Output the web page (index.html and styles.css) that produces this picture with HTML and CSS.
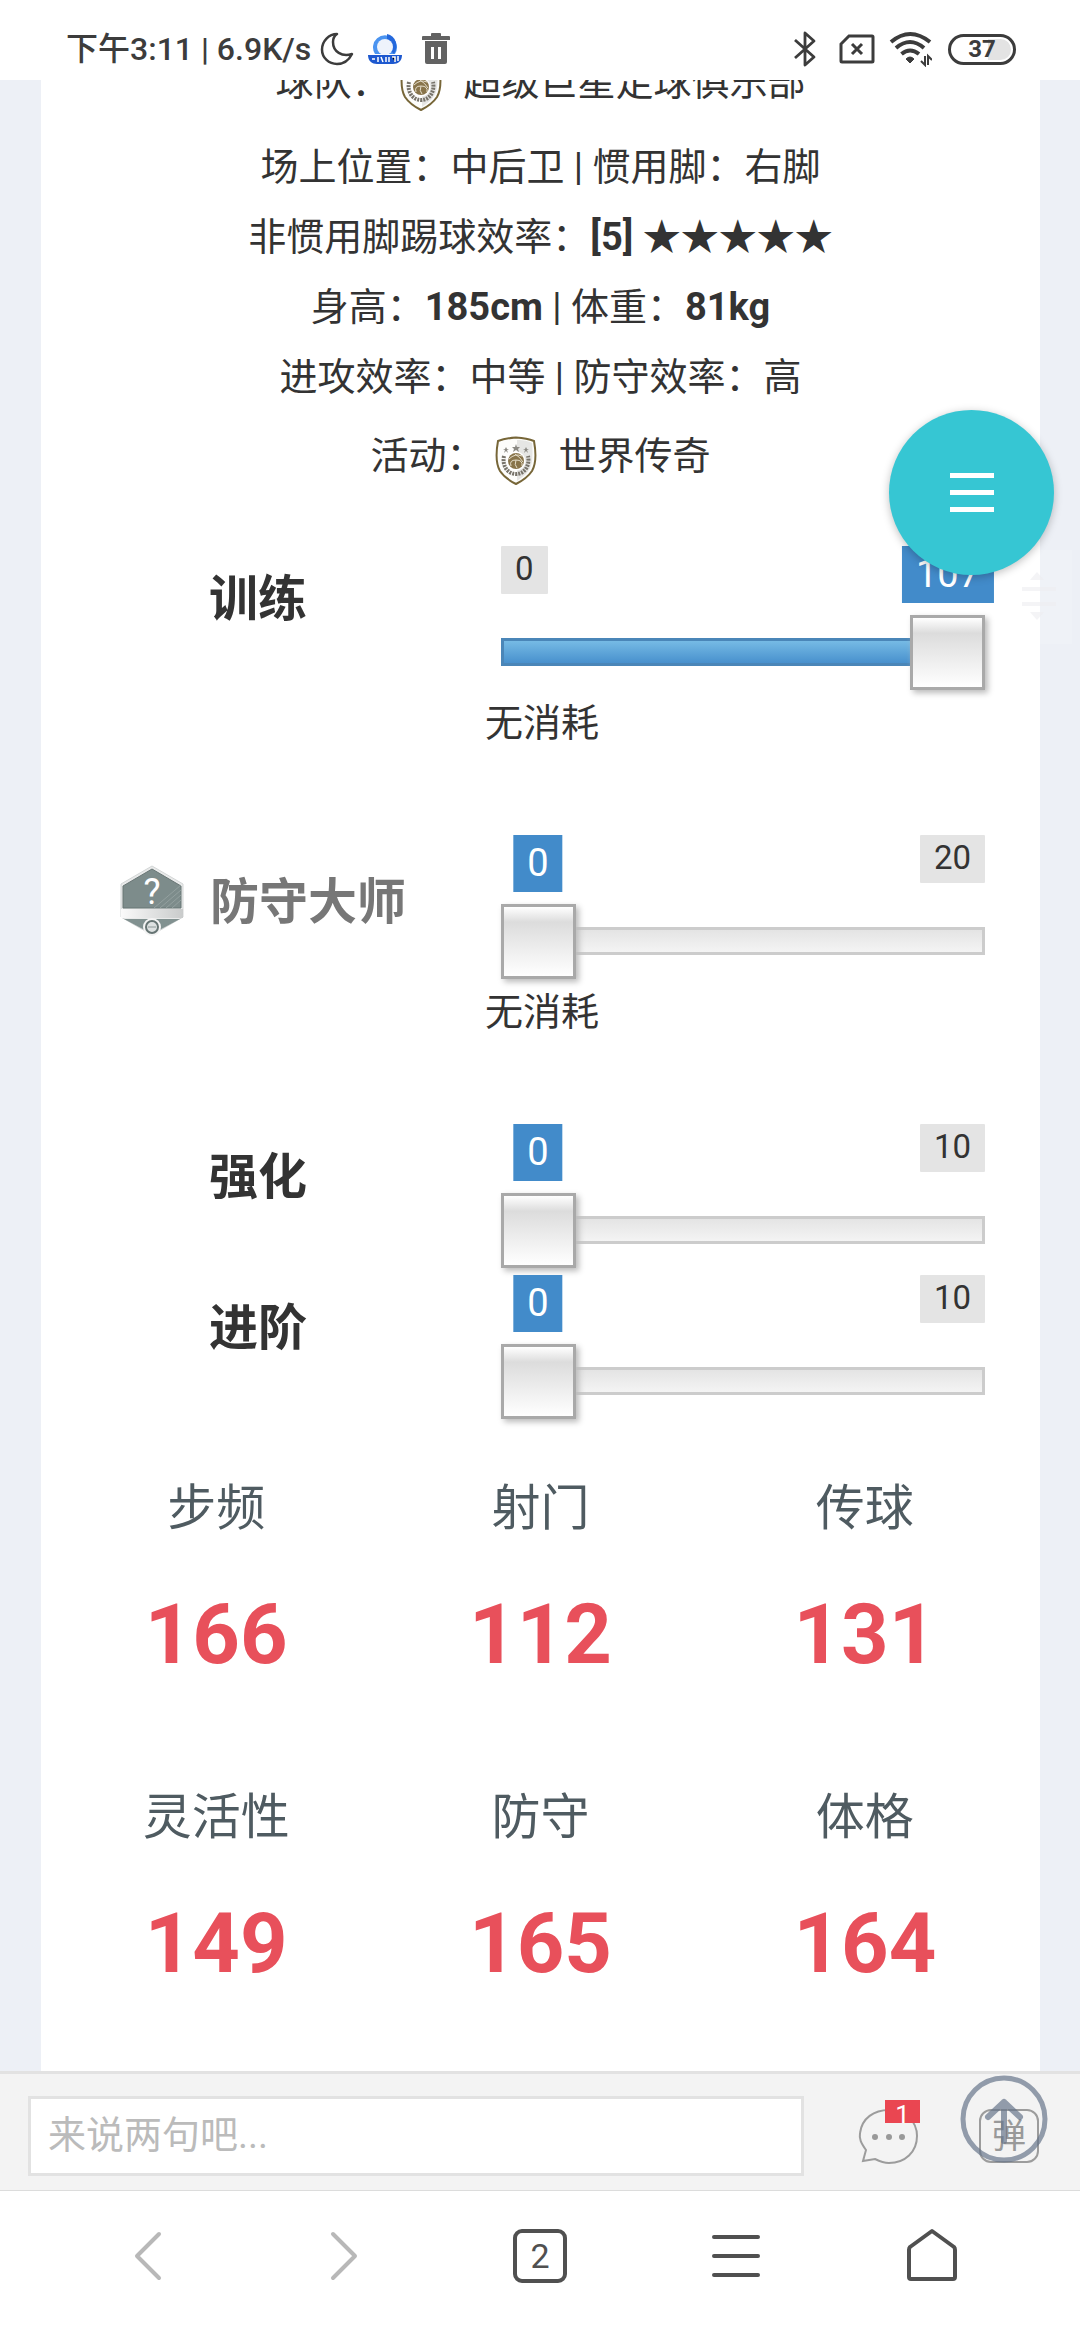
FILE: index.html
```html
<!DOCTYPE html>
<html lang="zh-CN">
<head>
  <meta charset="UTF-8">
  <meta name="viewport" content="width=device-width, initial-scale=1.0">
  <title>球员数据</title>
  <link rel="stylesheet" href="styles.css">
</head>
<body>
  <!-- shared shield badge -->
  <svg class="defs" width="0" height="0" aria-hidden="true">
    <symbol id="shield" viewBox="0 0 42 49">
      <path d="M21 1.500C14 2 8 3 3 5C1 16 1 28 5 35C9 41 15 45 21 48C27 45 33 41 37 35C41 28 41 16 39 5C34 3 28 2 21 1.500Z" fill="#fdfdfb" stroke="#776638" stroke-width="2"/>
      <path d="M22 4C29 4 33 5 37 7C38 17 38 28 34 34C31 39 26 42 22 45Z" fill="#e6e6e4"/>
      <path d="M9 20C7 29 12 38 21 38C30 38 35 29 33 20" fill="none" stroke="#77736a" stroke-width="4" stroke-dasharray="2 1"/>
      <circle cx="21" cy="25" r="9.500" fill="#fff"/>
      <circle cx="21" cy="25" r="8" fill="#88744a"/>
      <path d="M14 23Q20 17 27 20M16 30Q14 24 21 24Q28 24 27 30M21 24Q19 29 22 32M20 18Q25 21 28 26" fill="none" stroke="#e6dfcb" stroke-width="1"/>
      <path d="M21 8l1 3h3l-2 2 1 3-3-2-3 2 1-3-2-2h3zM11 11l1 2h2l-2 1 1 3-2-2-2 2 1-3-2-1h2zM31 11l1 2h2l-2 1 1 3-2-2-2 2 1-3-2-1h2z" fill="#8c8a84"/>
    </symbol>
  </svg>

  <header class="status">
    <div class="status-left">
      <span class="status-text">下午3:11 | 6.9K/s</span>
      <svg width="34" height="34" viewBox="0 0 34 34"><path d="M17 2C9 2 2 9 2 17.500C2 26 9 32 17 32C24 32 29 28 32 22C22 25 13 20 13 10C13 7 14 4 17 2Z" fill="none" stroke="#3c3c3c" stroke-width="2.500" stroke-linejoin="round"/></svg>
      <svg class="logo" width="34" height="32" viewBox="0 0 34 32">
        <path d="M7 21A12 12 0 1 1 27 21Z" fill="#4b94f0"/>
        <path d="M19 1C28 3 31 13 26 21L19 14Z" fill="#2468dc"/>
        <circle cx="17" cy="14" r="8" fill="#eef3fb"/>
        <path d="M0 22H34C34 28 30 31 25 31H9C4 31 0 28 0 22Z" fill="#1d58cf"/>
        <path d="M4 26h3M10 24v5M13 24l2 5M18 24v5M21 24v5M24 24h3v5M30 23v5" stroke="#fff" stroke-width="1.500"/>
      </svg>
      <svg class="trash" width="28" height="32" viewBox="0 0 28 32"><path fill="#626262" fill-rule="evenodd" d="M9 3V1Q9 0 10 0H18Q19 0 19 1V3H27Q28 3 28 4V7H0V4Q0 3 1 3ZM3 8H25V29Q25 31 23 31H5Q3 31 3 29ZM9 14V26H12V14ZM16 14V26H19V14Z"/></svg>
    </div>
    <div class="status-right">
      <svg width="22" height="36" viewBox="0 0 22 36"><path d="M1 9L20 26L11 34V2L20 10L1 27" fill="none" stroke="#3c3c3c" stroke-width="2.800" stroke-linejoin="round"/></svg>
      <svg class="sim" width="36" height="30" viewBox="0 0 36 30"><path d="M10 2H33Q34 2 34 3V27Q34 28 33 28H3Q2 28 2 27V10Z" fill="none" stroke="#3c3c3c" stroke-width="3"/><path d="M13 10L23 20M23 10L13 20" stroke="#3c3c3c" stroke-width="3"/></svg>
      <svg class="wifi" width="43" height="36" viewBox="0 0 43 36">
        <path d="M2 11Q21 -5 41 11M7 17Q21 5 35 17M12.500 23Q21 16 30 23" fill="none" stroke="#3c3c3c" stroke-width="4"/>
        <path d="M17 28Q21 24 25 28L21 32Z" fill="#3c3c3c" stroke="#3c3c3c" stroke-width="1"/>
        <path d="M36 25V34L32 30M39 34V25L43 29" fill="none" stroke="#3c3c3c" stroke-width="2"/>
      </svg>
      <span class="battery">37</span>
    </div>
  </header>

  <main class="page">
    <section class="card">
      <div class="info">
        <p class="info-badge">球队：<svg class="shield"><use href="#shield"/></svg>超级巨星足球俱乐部</p>
        <p>场上位置：中后卫 | 惯用脚：右脚</p>
        <p>非惯用脚踢球效率：<b>[5] ★★★★★</b></p>
        <p>身高：<b>185cm</b> | 体重：<b>81kg</b></p>
        <p>进攻效率：中等 | 防守效率：高</p>
        <p class="info-badge">活动：<svg class="shield"><use href="#shield"/></svg>世界传奇</p>
      </div>

      <div class="sliders">
        <div class="row">
          <label class="row-label" for="training">训练</label>
          <div class="row-body">
            <div class="slider">
              <div class="limits"><span class="limit">0</span></div>
              <div class="rail"><output class="value" for="training" style="left: 100%">107</output></div>
              <input class="range range-full" id="training" type="range" min="0" max="107" value="107">
            </div>
            <p class="note">无消耗</p>
          </div>
        </div>

        <div class="row">
          <label class="row-label row-label-icon" for="master">
            <svg class="hex" width="64" height="72" viewBox="0 0 64 72">
              <defs><linearGradient id="band" x1="0" x2="1" y1="0" y2="0"><stop offset="0" stop-color="#fafafa"/><stop offset="1" stop-color="#c9cbcb"/></linearGradient></defs>
              <path d="M32 1L63 19V52L32 70L1 52V19Z" fill="#e9eaea" stroke="#d3d6d6" stroke-width="1"/>
              <path d="M32 4L61 21V43H3V21Z" fill="#7d8c8b" stroke="#697675" stroke-width="1"/>
              <path d="M40 43L61 25M46 43L61 30M52 43L61 35M34 43L61 20" stroke="#93a09f" stroke-width="1"/>
              <rect x="1" y="44" width="62" height="9" fill="url(#band)"/>
              <path d="M4 54H60L32 69Z" fill="#819190"/>
              <circle cx="32" cy="62" r="9" fill="#f4f4f4"/>
              <circle cx="32" cy="62" r="6" fill="#dde1e1" stroke="#667473" stroke-width="2"/>
              <path d="M28 62H36" stroke="#8d9897" stroke-width="1"/>
              <text x="32" y="39" text-anchor="middle" class="hex-mark">?</text>
            </svg>
            防守大师
          </label>
          <div class="row-body">
            <div class="slider">
              <div class="limits limits-end"><span class="limit">20</span></div>
              <div class="rail"><output class="value" for="master" style="left: 0%">0</output></div>
              <input class="range" id="master" type="range" min="0" max="20" value="0">
            </div>
            <p class="note">无消耗</p>
          </div>
        </div>

        <div class="row">
          <label class="row-label" for="boost">强化</label>
          <div class="row-body">
            <div class="slider">
              <div class="limits limits-end"><span class="limit">10</span></div>
              <div class="rail"><output class="value" for="boost" style="left: 0%">0</output></div>
              <input class="range" id="boost" type="range" min="0" max="10" value="0">
            </div>
          </div>
        </div>

        <div class="row">
          <label class="row-label" for="rank">进阶</label>
          <div class="row-body">
            <div class="slider">
              <div class="limits limits-end"><span class="limit">10</span></div>
              <div class="rail"><output class="value" for="rank" style="left: 0%">0</output></div>
              <input class="range" id="rank" type="range" min="0" max="10" value="0">
            </div>
          </div>
        </div>
      </div>

      <dl class="stats">
        <div class="stat"><dt>步频</dt><dd>166</dd></div>
        <div class="stat"><dt>射门</dt><dd>112</dd></div>
        <div class="stat"><dt>传球</dt><dd>131</dd></div>
        <div class="stat"><dt>灵活性</dt><dd>149</dd></div>
        <div class="stat"><dt>防守</dt><dd>165</dd></div>
        <div class="stat"><dt>体格</dt><dd>164</dd></div>
      </dl>
    </section>
  </main>

  <footer class="comment">
    <input class="comment-input" type="text" placeholder="来说两句吧..." aria-label="评论">
    <button class="comment-btn" type="button" aria-label="评论列表">
      <svg width="62" height="60" viewBox="0 0 62 60">
        <path d="M8 44C3 37 1 33 2 27C4 12 16 4 31 4C47 4 59 15 59 30C59 46 47 57 31 57C26 57 21 55 17 53L5 55Z" fill="none" stroke="#9c9c9c" stroke-width="2"/>
        <g fill="#999"><circle cx="17" cy="31" r="3"/><circle cx="31" cy="31" r="3"/><circle cx="44" cy="31" r="3"/></g>
      </svg>
      <span class="badge">1</span>
    </button>
    <button class="danmu" type="button">弹</button>
    <a class="top-link" href="#" aria-label="回到顶部">
      <svg width="88" height="88" viewBox="0 0 88 88"><g fill="none" stroke="#66758a" stroke-opacity="0.700"><circle cx="44" cy="44" r="41" stroke-width="5"/><path d="M28 42L44 27L60 42M44 27V66" stroke-width="6" stroke-linejoin="round" stroke-linecap="round"/></g></svg>
    </a>
  </footer>

  <nav class="nav">
    <button type="button" aria-label="后退"><svg width="56" height="56" viewBox="0 0 56 56"><path d="M39 6L17 28L39 50" stroke="#b8b8b8"/></svg></button>
    <button type="button" aria-label="前进"><svg width="56" height="56" viewBox="0 0 56 56"><path d="M17 6L39 28L17 50" stroke="#b8b8b8"/></svg></button>
    <button type="button" aria-label="标签页"><span class="tabs">2</span></button>
    <button type="button" aria-label="菜单"><svg width="56" height="56" viewBox="0 0 56 56"><path d="M6 9H50M6 28H50M6 47H50"/></svg></button>
    <button type="button" aria-label="主页"><svg width="56" height="56" viewBox="0 0 56 56"><path d="M28 3L50 19Q51 20 51 22V49Q51 51 49 51H7Q5 51 5 49V22Q5 20 6 19Z"/></svg></button>
  </nav>

  <div class="scroller">
    <svg width="70" height="94" viewBox="0 0 70 94"><path d="M28 30L35 22L42 30ZM28 62L35 70L42 62ZM20 37H54V41H20ZM20 52H54V56H20Z" fill="#ededf0" fill-opacity="0.600"/></svg>
  </div>
  <button class="fab" type="button" aria-label="菜单"><i></i><i></i><i></i></button>
</body>
</html>
```
FILE: styles.css
```css
* {
  box-sizing: border-box;
}
body {
  margin: 0;
  height: 100vh;
  display: flex;
  flex-direction: column;
  position: relative;
  overflow: hidden;
  background-color: #edf0f6;
  color: #333;
  font-family: Roboto, "Noto Sans CJK SC", sans-serif;
  font-size: 38px;
}
p, dl, dd {
  margin: 0;
}
button {
  padding: 0;
  border: none;
  background: none;
  font-family: inherit;
  cursor: pointer;
}
svg {
  display: block;
}
.defs {
  position: absolute;
}

/* status bar */
.status {
  flex: none;
  height: 80px;
  padding: 18px 64px 0 66px;
  display: flex;
  justify-content: space-between;
  align-items: center;
  background-color: #fff;
  color: #3c3c3c;
}
.status-left, .status-right {
  display: flex;
  align-items: center;
}
.status-text {
  font-size: 32px;
  font-weight: 500;
  line-height: 40px;
  margin-right: 9px;
}
.logo {
  margin-left: 14px;
}
.trash {
  margin-left: 20px;
}
.sim {
  margin-left: 23px;
}
.wifi {
  margin-left: 14px;
}
.battery {
  width: 68px;
  height: 31px;
  margin-left: 16px;
  border: 3px solid #3c3c3c;
  border-radius: 16px;
  background: linear-gradient(90deg, #fff 60%, #e3e3e3 60%) content-box;
  padding: 2px;
  font-size: 24px;
  font-weight: 700;
  line-height: 21px;
  text-align: center;
}

/* player card */
.page {
  flex: 1;
  min-height: 0;
  padding: 0 40px 0 41px;
  overflow: hidden;
}
.card {
  min-height: 100%;
  background-color: #fff;
  display: flow-root;
}
.info {
  margin-top: -42px;
  text-align: center;
  line-height: 70px;
}
.info-badge {
  height: 94px;
  padding-bottom: 6px;
  display: flex;
  justify-content: center;
  align-items: center;
}
.shield {
  width: 42px;
  height: 49px;
  margin: 8px 22px 0 10px;
}

/* sliders */
.sliders {
  margin-top: 40px;
}
.row {
  display: grid;
  grid-template-columns: 4fr 5fr;
  padding-bottom: 8px;
}
.row-label {
  height: 96px;
  padding-left: 168px;
  display: flex;
  align-items: center;
  font-size: 49px;
  font-weight: 700;
}
.row-label-icon {
  height: 124px;
  padding-left: 79px;
  gap: 26px;
  color: #777;
}
.hex {
  margin-top: 8px;
}
.hex-mark {
  font-size: 36px;
  font-weight: 400;
  fill: #fff;
}
.slider {
  margin: 0 55px 0 16px;
}
.limits {
  height: 68px;
  display: flex;
  align-items: flex-start;
}
.limits-end {
  justify-content: flex-end;
}
.limit {
  height: 48px;
  padding: 0 14px;
  border-radius: 1px;
  background-color: #e4e4e4;
  font-size: 33px;
  line-height: 46px;
}
.rail {
  position: relative;
  margin: 0 37px;
}
.value {
  position: absolute;
  bottom: 11px;
  height: 57px;
  padding: 0 14px;
  transform: translateX(-50%);
  background-color: #428bca;
  color: #fff;
  font-size: 38px;
  line-height: 56px;
}
.range {
  -webkit-appearance: none;
  appearance: none;
  display: block;
  width: 100%;
  height: 75px;
  margin: 0;
  background: none;
}
.range::-webkit-slider-runnable-track {
  height: 28px;
  box-shadow: inset 0 0 0 3px #ccc;
  background: linear-gradient(#e2e2e2, #f6f6f6);
}
.range-full::-webkit-slider-runnable-track {
  box-shadow: inset 0 0 0 3px #4a86b8;
  background: linear-gradient(#7cc0e8, #428bca);
}
.range::-webkit-slider-thumb {
  -webkit-appearance: none;
  width: 75px;
  height: 75px;
  margin-top: -23px;
  border: 3px solid #a9a9a9;
  background: linear-gradient(#fff, #dcdcdc 22%, #fff);
  box-shadow: 3px 3px 6px #bbb;
}
.note {
  margin-bottom: 70px;
  line-height: 68px;
}

/* stats */
.stats {
  display: grid;
  grid-template-columns: repeat(3, 1fr);
  padding: 48px 13px 0;
  text-align: center;
}
.stat {
  padding-bottom: 98px;
}
.stat dt {
  font-size: 49px;
  line-height: 70px;
  color: #4f5b61;
}
.stat dd {
  margin-top: 41px;
  font-size: 83px;
  font-weight: 700;
  line-height: 100px;
  color: #e8505b;
}

/* comment bar */
.comment {
  flex: none;
  position: relative;
  height: 120px;
  padding: 7px 41px 0 28px;
  display: flex;
  align-items: center;
  border-top: 3px solid #e2e2e2;
  border-bottom: 1px solid #dcdcdc;
  background-color: #f3f3f3;
}
.comment-input {
  flex: 1;
  min-width: 0;
  height: 80px;
  padding: 0 17px 2px;
  border: 3px solid #e2e2e2;
  background-color: #fff;
  font-family: inherit;
  font-size: 38px;
}
.comment-input::placeholder {
  color: #bbb;
}
.comment-btn {
  position: relative;
  margin-left: 54px;
}
.badge {
  position: absolute;
  top: -6px;
  right: 0;
  width: 35px;
  height: 23px;
  overflow: hidden;
  background-color: #ea4651;
  color: #fff;
  font-size: 26px;
  line-height: 30px;
  text-align: center;
}
.danmu {
  width: 60px;
  height: 54px;
  margin-left: 59px;
  border: 2px solid #9c9c9c;
  border-radius: 12px;
  color: #999;
  font-size: 34px;
  line-height: 48px;
}
.top-link {
  position: absolute;
  top: 1px;
  right: 32px;
}

/* browser nav */
.nav {
  flex: none;
  height: 149px;
  padding: 0 50px 20px;
  display: grid;
  grid-template-columns: repeat(5, 1fr);
  background-color: #fff;
}
.nav button {
  display: flex;
  justify-content: center;
  align-items: center;
}
.nav path {
  fill: none;
  stroke-width: 4;
  stroke-linecap: round;
  stroke-linejoin: round;
}
.nav path:not([stroke]) {
  stroke: #505050;
}
.tabs {
  width: 54px;
  height: 54px;
  border: 4px solid #505050;
  border-radius: 9px;
  color: #505050;
  font-size: 34px;
  line-height: 46px;
}

/* floating controls */
.scroller {
  position: absolute;
  top: 550px;
  right: 8px;
  background-color: rgba(255, 255, 255, 0.15);
}
.fab {
  position: absolute;
  top: 410px;
  right: 26px;
  width: 165px;
  height: 165px;
  display: flex;
  flex-direction: column;
  justify-content: center;
  align-items: center;
  gap: 12px;
  border-radius: 50%;
  background-color: #36c6d3;
  box-shadow: 0 2px 8px rgba(0, 0, 0, 0.25);
}
.fab i {
  width: 44px;
  height: 5px;
  background-color: #fff;
}
```
